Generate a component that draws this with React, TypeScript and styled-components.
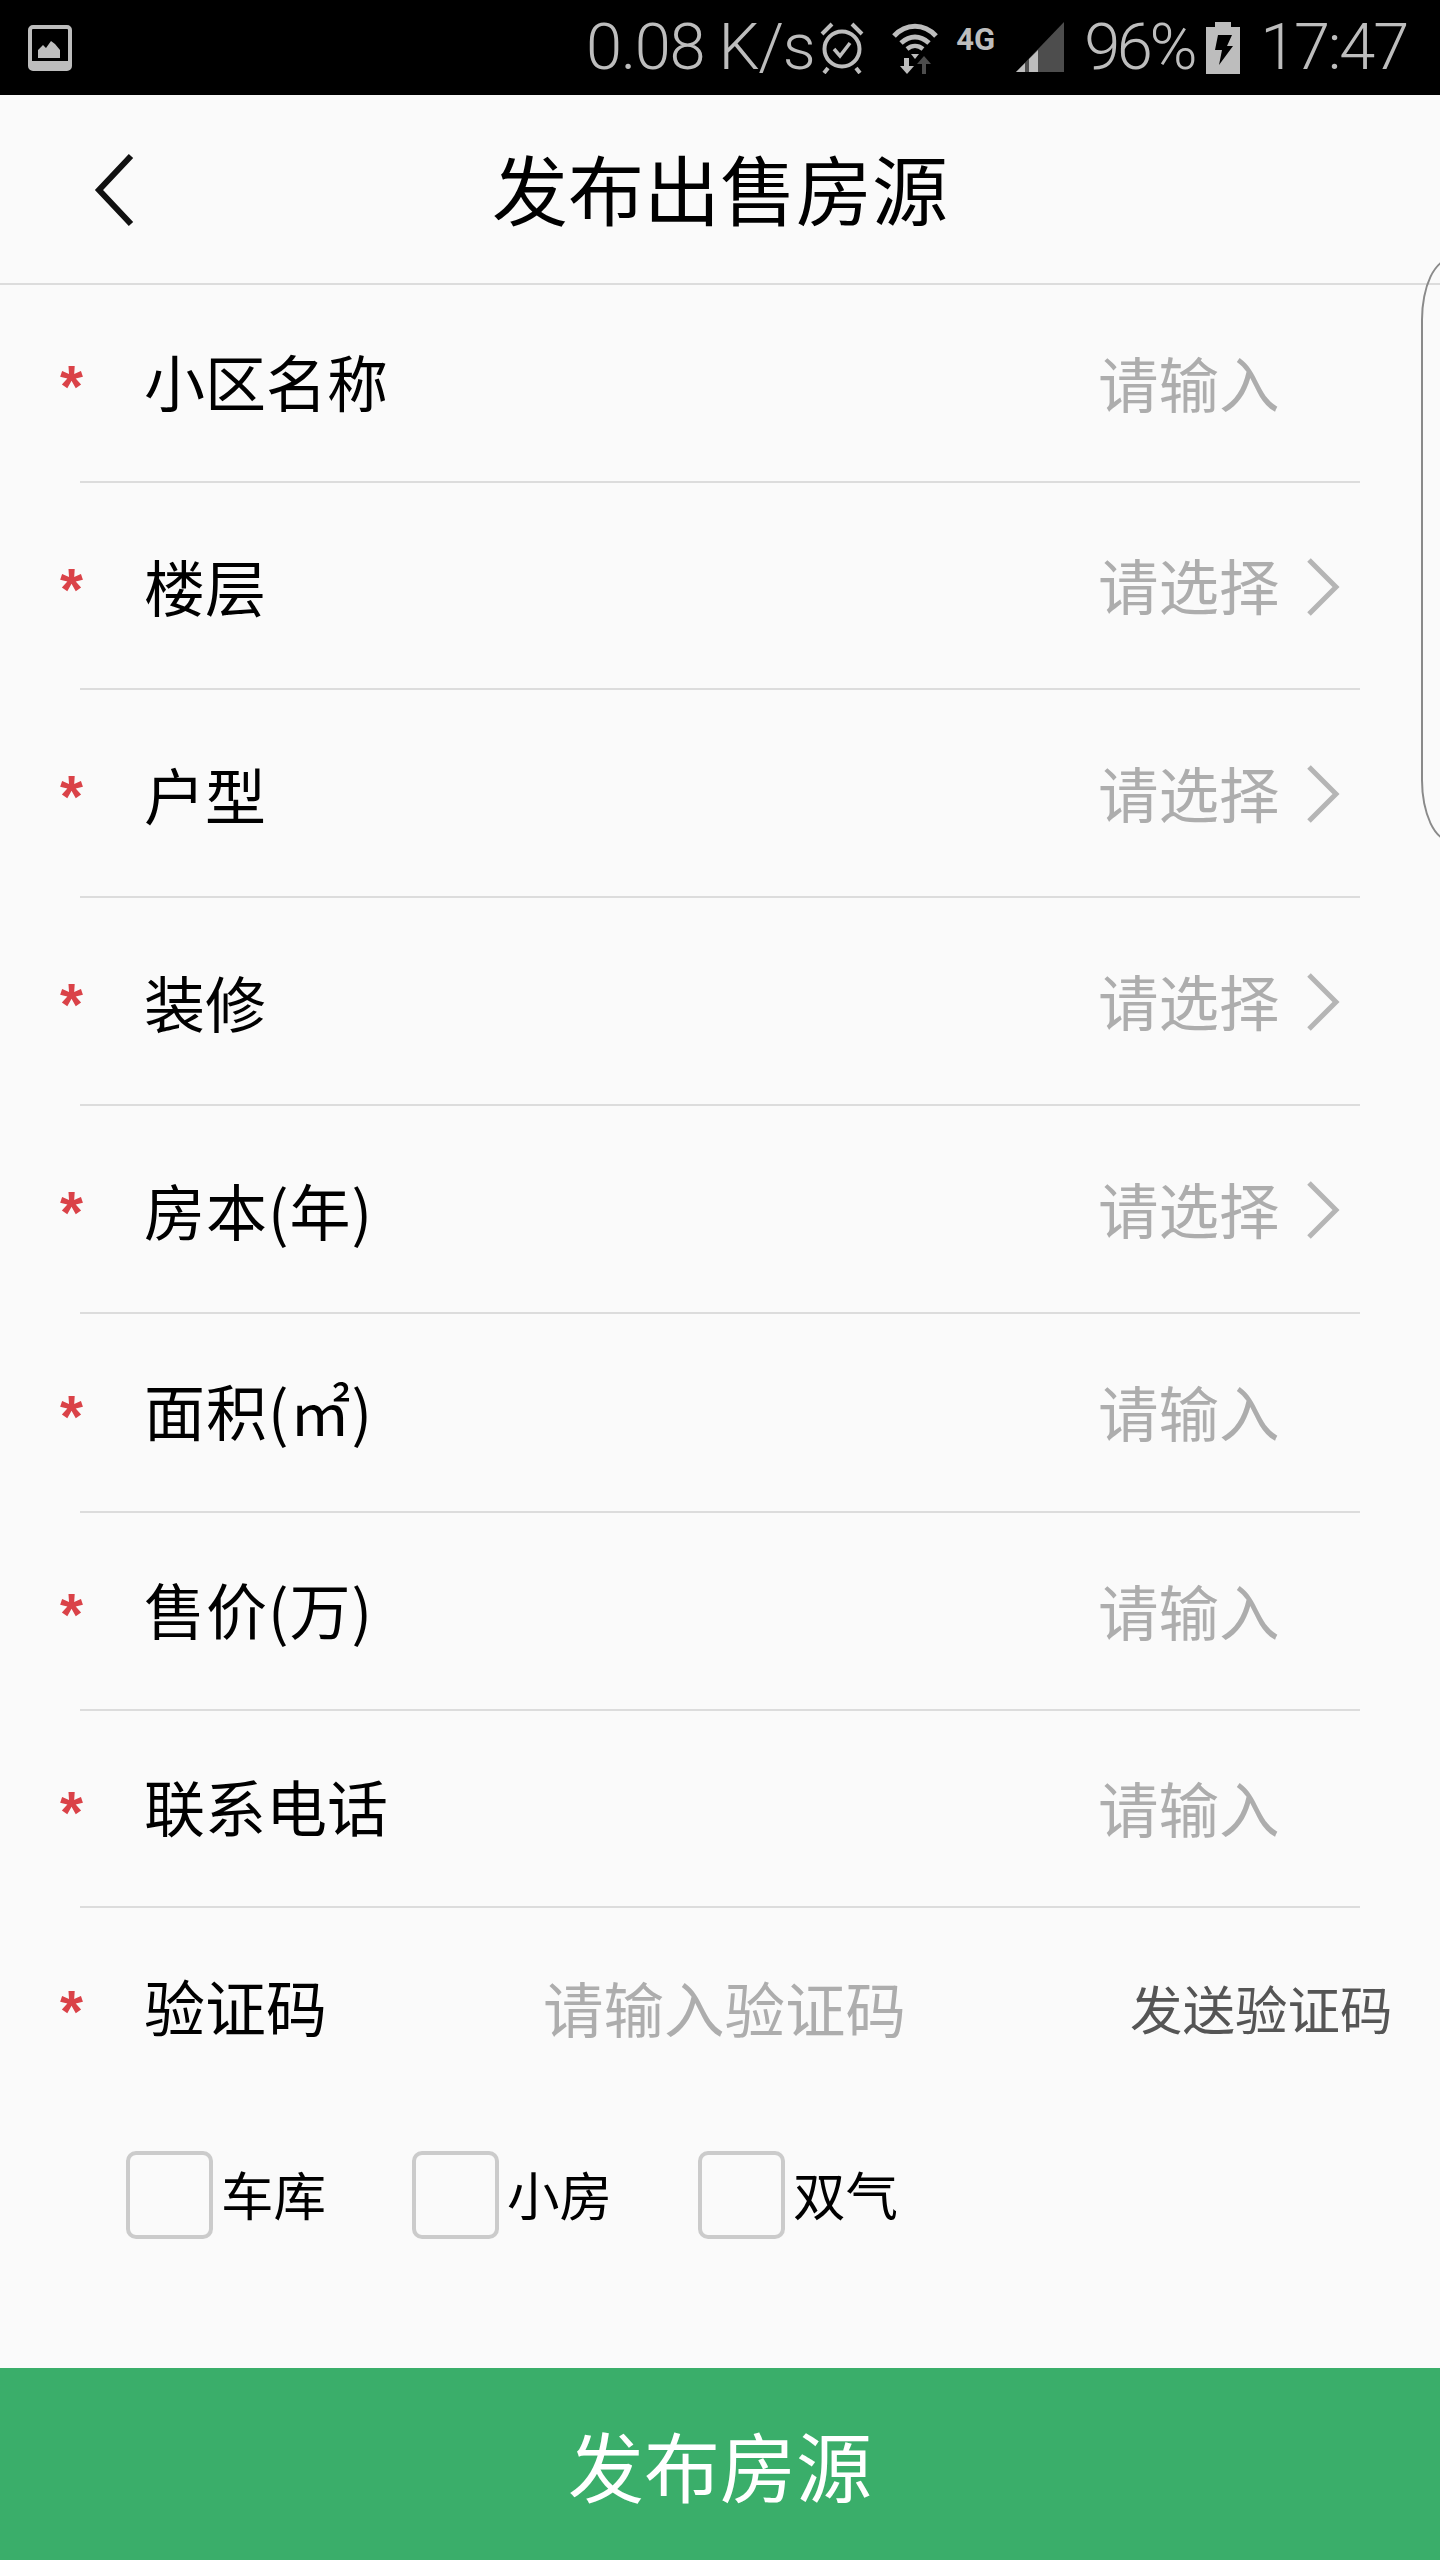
import React from "react";
import styled, { createGlobalStyle } from "styled-components";

const Global = createGlobalStyle`
  html, body { margin: 0; padding: 0; background: #fafafa; }
  * { box-sizing: border-box; }
`;

const Page = styled.div`
  position: relative;
  width: 1440px;
  height: 2560px;
  overflow: hidden;
  display: flex;
  flex-direction: column;
  background: #fafafa;
  font-family: "Noto Sans CJK SC", "Noto Sans", sans-serif;
  color: #000;
`;

const StatusBar = styled.div`
  flex: none;
  height: 95px;
  background: #000;
  color: #bdbdbd;
  display: flex;
  align-items: center;
  padding: 0 33px 0 28px;
  font-family: Roboto, sans-serif;
  font-weight: 300;
`;

const StatusText = styled.span<{ $ml?: number; $ls?: number }>`
  font-size: 65px;
  line-height: 95px;
  letter-spacing: ${(p) => p.$ls ?? -1.8}px;
  margin-left: ${(p) => p.$ml ?? 0}px;
  white-space: nowrap;
`;

const NetworkLabel = styled.span`
  font-size: 31px;
  font-weight: 700;
  line-height: 30px;
  margin: -16px 0 0 18px;
`;

const StatusIcon = styled.svg<{ $ml?: number }>`
  flex: none;
  display: block;
  margin-left: ${(p) => p.$ml ?? 0}px;
`;

const Spacer = styled.div`
  flex: 1;
`;

const NavBar = styled.header`
  flex: none;
  height: 190px;
  position: relative;
  display: flex;
  align-items: center;
  justify-content: center;
  border-bottom: 2px solid #dcdcdc;
`;

const BackButton = styled.button`
  position: absolute;
  left: 94px;
  top: 58px;
  width: 48px;
  height: 74px;
  padding: 0;
  border: 0;
  background: none;
`;

const Title = styled.h1`
  margin: 0;
  font-size: 76px;
  font-weight: 400;
  line-height: 1;
  position: relative;
  top: -2px;
`;

const Row = styled.div<{ $h: number; $line?: boolean }>`
  flex: none;
  height: ${(p) => p.$h}px;
  margin-left: 80px;
  width: 1280px;
  display: flex;
  align-items: center;
  position: relative;
  border-bottom: ${(p) => (p.$line === false ? "0" : "2px solid #dcdcdc")};
`;

const Star = styled.span`
  position: absolute;
  left: -20px;
  top: 50%;
  margin-top: -40px;
  width: 28px;
  color: #da4248;
  font-family: "Liberation Sans", sans-serif;
  font-weight: 700;
  font-size: 59px;
  line-height: 88px;
`;

const Label = styled.span<{ $wide?: boolean; $low?: boolean }>`
  margin: ${(p) => (p.$low ? 0 : -6)}px 0 0 64px;
  font-size: 61px;
  line-height: 1;
  white-space: nowrap;
  letter-spacing: ${(p) => (p.$wide ? "1px" : "0")};
`;

const Value = styled.span`
  position: absolute;
  left: 1018px;
  margin-top: -2px;
  font-size: 60.5px;
  line-height: 1;
  color: #adadad;
  white-space: nowrap;
`;

const Chevron = styled.svg`
  position: absolute;
  left: 1226px;
  top: 50%;
  margin-top: -28px;
`;

const CodeInput = styled.span`
  position: absolute;
  left: 463px;
  margin-top: -2px;
  font-size: 60.5px;
  line-height: 1;
  color: #adadad;
  white-space: nowrap;
`;

const SendCode = styled.span`
  position: absolute;
  left: 1050px;
  margin-top: -2px;
  font-size: 52.5px;
  line-height: 1;
  color: #555;
  white-space: nowrap;
`;

const Options = styled.div`
  flex: none;
  display: flex;
  padding: 43px 0 0 126px;
`;

const Option = styled.label`
  width: 286px;
  display: flex;
  align-items: center;
  gap: 8px;
`;

const Box = styled.span`
  flex: none;
  width: 87px;
  height: 88px;
  border: 4px solid #cbcbcb;
  border-radius: 10px;
  background: #fafafa;
`;

const OptionText = styled.span`
  font-size: 52.5px;
  line-height: 1;
  margin-top: -3px;
`;

const Submit = styled.button`
  flex: none;
  margin-top: auto;
  height: 192px;
  width: 100%;
  border: 0;
  background: #3aae6a;
  color: #fff;
  font-family: inherit;
  font-size: 76px;
  line-height: 1;
`;

const EdgeHandle = styled.div`
  position: absolute;
  left: 1421px;
  top: 258px;
  width: 60px;
  height: 584px;
  border: 2px solid #8a8a8a;
  border-radius: 34px / 70px;
`;

const selectRows = [
  { label: "小区名称", value: "请输入", h: 198 },
  { label: "楼层", value: "请选择", h: 207, arrow: true },
  { label: "户型", value: "请选择", h: 208, arrow: true },
  { label: "装修", value: "请选择", h: 208, arrow: true },
  { label: "房本(年)", value: "请选择", h: 208, arrow: true, wide: true },
  { label: "面积(㎡)", value: "请输入", h: 199, wide: true },
  { label: "售价(万)", value: "请输入", h: 198, wide: true },
  { label: "联系电话", value: "请输入", h: 197 },
];

export default function App() {
  return (
    <Page>
      <Global />
      <StatusBar>
        <StatusIcon width="44" height="46" viewBox="0 0 44 46">
          <rect x="2" y="2" width="40" height="42" rx="3" fill="none" stroke="#bdbdbd" strokeWidth="4" />
          <rect x="2" y="36" width="40" height="8" fill="#bdbdbd" />
          <path d="M10 33V25l5-5 3 3 5-7 4 3 5 6v8z" fill="#bdbdbd" />
        </StatusIcon>
        <Spacer />
        <StatusText $ls={-1.4}>0.08 K/s</StatusText>
        <StatusIcon $ml={6} width="44" height="52" viewBox="0 0 44 52">
          <circle cx="22" cy="27" r="17.5" fill="none" stroke="#bdbdbd" strokeWidth="4" />
          <path d="M14 27l6 7 10-13" fill="none" stroke="#bdbdbd" strokeWidth="3.5" />
          <path d="M2 12L12 2M42 12L32 2M8 46l-4 5M36 46l4 5" stroke="#bdbdbd" strokeWidth="4" fill="none" />
        </StatusIcon>
        <StatusIcon $ml={28} width="46" height="52" viewBox="0 0 46 52">
          <path d="M2 14C14 1 32 1 44 14" fill="none" stroke="#bdbdbd" strokeWidth="5" />
          <path d="M9 21c9-8 19-8 28 0" fill="none" stroke="#bdbdbd" strokeWidth="5" />
          <path d="M15 27c5-4 11-4 16 0" fill="none" stroke="#bdbdbd" strokeWidth="4.5" />
          <path d="M19 32h8l-4 5z" fill="#bdbdbd" />
          <path d="M12 36h5v8h5l-7 8-7-8h4z" fill="#bdbdbd" />
          <path d="M30 52v-10h-5l7-8 7 8h-5v10z" fill="#4d4d4d" />
        </StatusIcon>
        <NetworkLabel>4G</NetworkLabel>
        <StatusIcon $ml={21} width="48" height="52" viewBox="0 0 48 52">
          <path d="M0 50L48 0v50z" fill="#4d4d4d" />
          <path d="M0 50L9 41v9zM13 50V37l9-9v22z" fill="#bdbdbd" />
        </StatusIcon>
        <StatusText $ml={20} $ls={-3.4}>96%</StatusText>
        <StatusIcon $ml={12} width="34" height="52" viewBox="0 0 34 52">
          <path d="M9 0h16v5h9v47H0V5h9z" fill="#bdbdbd" />
          <path d="M12 13h14l-5 11h6L13 43l3-15h-7z" fill="#000" />
        </StatusIcon>
        <StatusText $ml={20} $ls={-2.2}>17:47</StatusText>
      </StatusBar>

      <NavBar>
        <BackButton aria-label="返回">
          <svg width="48" height="74" viewBox="0 0 48 74">
            <path d="M37 3L5 37l32 34" fill="none" stroke="#111" strokeWidth="6" />
          </svg>
        </BackButton>
        <Title>发布出售房源</Title>
      </NavBar>

      {selectRows.map((r) => (
        <Row key={r.label} $h={r.h}>
          <Star>*</Star>
          <Label $wide={r.wide} $low={r.arrow}>{r.label}</Label>
          <Value>{r.value}</Value>
          {r.arrow && (
            <Chevron width="34" height="58" viewBox="0 0 34 58">
              <path d="M3 2l27 27L3 56" fill="none" stroke="#b5b5b5" strokeWidth="5" />
            </Chevron>
          )}
        </Row>
      ))}

      <Row $h={200} $line={false}>
        <Star>*</Star>
        <Label>验证码</Label>
        <CodeInput>请输入验证码</CodeInput>
        <SendCode>发送验证码</SendCode>
      </Row>

      <Options>
        {["车库", "小房", "双气"].map((t) => (
          <Option key={t}>
            <Box />
            <OptionText>{t}</OptionText>
          </Option>
        ))}
      </Options>

      <Submit>发布房源</Submit>
      <EdgeHandle />
    </Page>
  );
}
